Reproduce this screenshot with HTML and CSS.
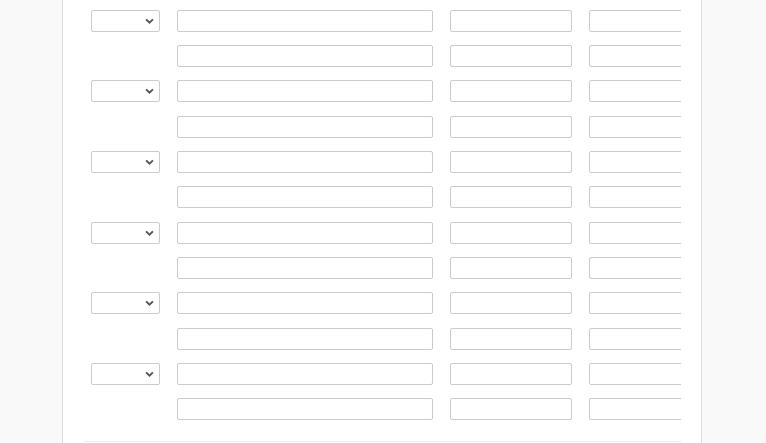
FILE: index.html
```html
<!DOCTYPE html>
<html>
<head>
<meta charset="utf-8">
<link rel="stylesheet" href="styles.css">
</head>
<body>
<div class="panel">
  <div class="table-wrap">
    <div class="rows">
      <div class="row"><span class="sel"><select class="select"></select><svg class="chev" viewBox="0 0 10 6" width="9" height="6"><path d="M1.2 1.2 L5 4.8 L8.8 1.2" fill="none" stroke="#555" stroke-width="2.2"/></svg></span><input class="inp w1"><input class="inp w2"><input class="inp w3"></div>
      <div class="row"><span class="spacer"></span><input class="inp w1"><input class="inp w2"><input class="inp w3"></div>
      <div class="row"><span class="sel"><select class="select"></select><svg class="chev" viewBox="0 0 10 6" width="9" height="6"><path d="M1.2 1.2 L5 4.8 L8.8 1.2" fill="none" stroke="#555" stroke-width="2.2"/></svg></span><input class="inp w1"><input class="inp w2"><input class="inp w3"></div>
      <div class="row"><span class="spacer"></span><input class="inp w1"><input class="inp w2"><input class="inp w3"></div>
      <div class="row"><span class="sel"><select class="select"></select><svg class="chev" viewBox="0 0 10 6" width="9" height="6"><path d="M1.2 1.2 L5 4.8 L8.8 1.2" fill="none" stroke="#555" stroke-width="2.2"/></svg></span><input class="inp w1"><input class="inp w2"><input class="inp w3"></div>
      <div class="row"><span class="spacer"></span><input class="inp w1"><input class="inp w2"><input class="inp w3"></div>
      <div class="row"><span class="sel"><select class="select"></select><svg class="chev" viewBox="0 0 10 6" width="9" height="6"><path d="M1.2 1.2 L5 4.8 L8.8 1.2" fill="none" stroke="#555" stroke-width="2.2"/></svg></span><input class="inp w1"><input class="inp w2"><input class="inp w3"></div>
      <div class="row"><span class="spacer"></span><input class="inp w1"><input class="inp w2"><input class="inp w3"></div>
      <div class="row"><span class="sel"><select class="select"></select><svg class="chev" viewBox="0 0 10 6" width="9" height="6"><path d="M1.2 1.2 L5 4.8 L8.8 1.2" fill="none" stroke="#555" stroke-width="2.2"/></svg></span><input class="inp w1"><input class="inp w2"><input class="inp w3"></div>
      <div class="row"><span class="spacer"></span><input class="inp w1"><input class="inp w2"><input class="inp w3"></div>
      <div class="row"><span class="sel"><select class="select"></select><svg class="chev" viewBox="0 0 10 6" width="9" height="6"><path d="M1.2 1.2 L5 4.8 L8.8 1.2" fill="none" stroke="#555" stroke-width="2.2"/></svg></span><input class="inp w1"><input class="inp w2"><input class="inp w3"></div>
      <div class="row"><span class="spacer"></span><input class="inp w1"><input class="inp w2"><input class="inp w3"></div>
    </div>
  </div>
</div>
</body>
</html>
```

FILE: styles.css
```css
html, body {
  margin: 0;
  padding: 0;
  height: 100%;
  background: #f9f9f9;
  font-family: "Open Sans", "Liberation Sans", sans-serif;
  overflow: hidden;
}
.panel {
  box-sizing: border-box;
  margin-left: 62px;
  width: 640px;
  height: 443px;
  background: #fff;
  border-left: 1px solid #dcdcdc;
  border-right: 1px solid #dcdcdc;
  padding: 9.7px 20px 0 21px;
}
.table-wrap {
  width: 597px;
  overflow: hidden;
  border-bottom: 1px solid #ebebeb;
  padding-bottom: 7.3px;
}
.rows {
  display: flex;
  flex-direction: column;
}
.row {
  display: flex;
  align-items: flex-start;
  gap: 17px;
  padding-left: 7px;
  height: 35.333px;
  flex-shrink: 0;
}
.sel {
  position: relative;
  display: block;
  width: 69px;
  height: 22px;
  flex-shrink: 0;
}
.select {
  -webkit-appearance: none;
  appearance: none;
  box-sizing: border-box;
  width: 69px;
  height: 22px;
  margin: 0;
  border: 1px solid #cbcbcb;
  border-radius: 2px;
  background: #fff;
  display: block;
}
.chev {
  position: absolute;
  right: 6px;
  top: 8px;
  pointer-events: none;
}
.spacer {
  display: block;
  width: 69px;
  flex-shrink: 0;
}
.inp {
  box-sizing: border-box;
  height: 22px;
  margin: 0;
  padding: 0;
  border: 1px solid #cbcbcb;
  border-radius: 2px;
  background: #fff;
  flex-shrink: 0;
  display: block;
}
.w1 { width: 256px; }
.w2 { width: 122px; }
.w3 { width: 122px; }
```
